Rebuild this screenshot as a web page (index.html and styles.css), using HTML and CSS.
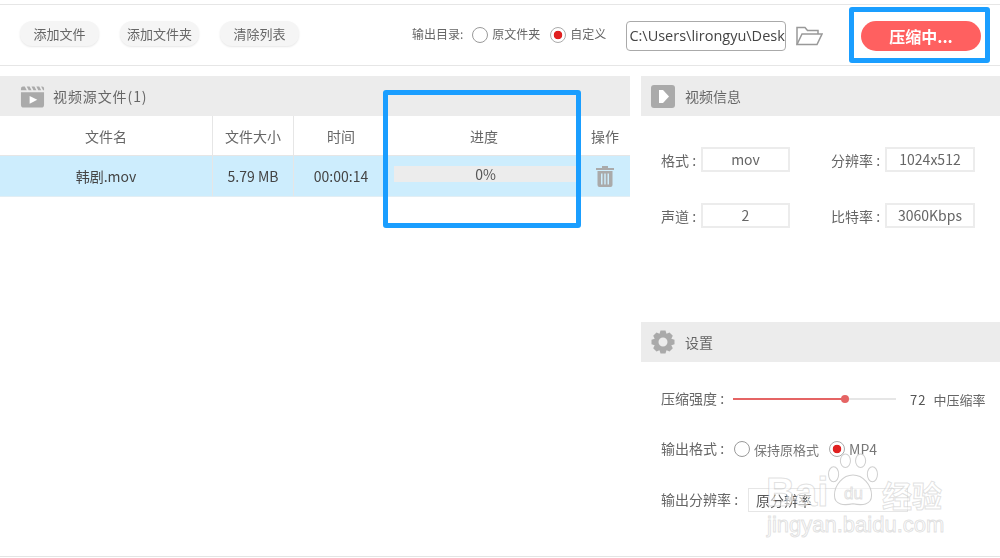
FILE: index.html
```html
<!DOCTYPE html>
<html lang="zh-CN">
<head>
  <meta charset="UTF-8">
  <title>视频压缩</title>
  <link rel="stylesheet" href="styles.css">
</head>
<body>
  <div class="app">
    <div class="toolbar">
      <button class="tool-btn">添加文件</button>
      <button class="tool-btn">添加文件夹</button>
      <button class="tool-btn">清除列表</button>
      <span class="out-label">输出目录:</span>
      <span class="radio"></span>
      <span class="radio-text">原文件夹</span>
      <span class="radio on"></span>
      <span class="radio-text">自定义</span>
      <div class="path-box">C:\Users\lirongyu\Desk</div>
      <svg class="folder" width="27" height="20" viewBox="0 0 27 20" fill="none" stroke="#999" stroke-width="1.5">
        <path d="M1 18.500V1.500H9L11.500 4.500H22V8"/>
        <path d="M1 18.500L6 8H26L21 18.500Z"/>
      </svg>
      <button class="run-btn">压缩中...</button>
    </div>

    <div class="main">
      <div class="left">
        <div class="panel-head">
          <svg width="25" height="23" viewBox="0 0 26 23">
            <path fill="#aaa" d="M1 3.500Q1 1 3 1H5L7 5H1ZM7 1H10L12 5H9ZM12 1H15L17 5H14ZM17 1H20L22 5H19ZM22 1H23Q25 1 25 3V5H24Z"/>
            <path fill="#aaa" d="M1 7H25V20Q25 23 22 23H4Q1 23 1 20Z"/>
            <path fill="#fff" d="M10 11L18 15L10 19Z"/>
          </svg>
          <span class="source-title">视频源文件(1)</span>
        </div>
        <div class="file-row file-head">
          <div class="cell">文件名</div>
          <div class="cell">文件大小</div>
          <div class="cell">时间</div>
          <div class="cell">进度</div>
          <div class="cell">操作</div>
        </div>
        <div class="file-row file-item">
          <div class="cell">韩剧.mov</div>
          <div class="cell">5.79 MB</div>
          <div class="cell">00:00:14</div>
          <div class="cell"><div class="progress">0%</div></div>
          <div class="cell">
            <svg width="18" height="21" viewBox="0 0 18 21" fill="#aaa">
              <path d="M6 0H12V2H18V4H0V2H6Z"/>
              <path d="M1.500 5H16.500V19Q16.500 21 14.500 21H3.500Q1.500 21 1.500 19ZM5 7.500V18.500H6.500V7.500ZM8.250 7.500V18.500H9.750V7.500ZM11.500 7.500V18.500H13V7.500Z" fill-rule="evenodd"/>
            </svg>
          </div>
        </div>
      </div>

      <div class="right">
        <div class="panel-head">
          <svg width="24" height="23" viewBox="0 0 24 23">
            <rect width="24" height="23" rx="3" fill="#aaa"/>
            <path fill="#fff" d="M8 5H12L18 11.500L12 18H8Z"/>
          </svg>
          <span>视频信息</span>
        </div>
        <div class="info-grid">
          <span class="info-label">格式 :</span><div class="info-val">mov</div>
          <span class="info-label">分辨率 :</span><div class="info-val">1024x512</div>
          <span class="info-label">声道 :</span><div class="info-val">2</div>
          <span class="info-label">比特率 :</span><div class="info-val">3060Kbps</div>
        </div>

        <div class="panel-head settings-head">
          <svg width="24" height="24" viewBox="0 0 24 24" fill="#aaa">
            <path fill-rule="evenodd" d="M9.500 0.500H14.500L15.500 3.800L18.500 2.500L21.800 5.800L20.300 8.800L23.500 9.800V14.300L20.300 15.300L21.800 18.300L18.500 21.600L15.500 20.200L14.500 23.500H9.500L8.500 20.200L5.500 21.600L2.200 18.300L3.700 15.300L0.500 14.300V9.800L3.700 8.800L2.200 5.800L5.500 2.500L8.500 3.800ZM12 7.500A4.500 4.500 0 1 0 12 16.500A4.500 4.500 0 1 0 12 7.500Z"/>
          </svg>
          <span>设置</span>
        </div>
        <div class="set-row strength">
          <span class="set-label">压缩强度 :</span>
          <div class="slider"><div class="slider-fill" style="width: 69%"></div><div class="slider-thumb" style="left: 69%"></div></div>
          <span class="slider-val">72</span>
          <span class="slider-name">中压缩率</span>
        </div>
        <div class="set-row format">
          <span class="set-label">输出格式 :</span>
          <span class="radio"></span>
          <span class="radio-text big">保持原格式</span>
          <span class="radio on"></span>
          <span class="radio-text big mp4">MP4</span>
        </div>
        <div class="set-row res">
          <span class="set-label">输出分辨率 :</span>
          <div class="res-box">原分辨率</div>
        </div>
      </div>
    </div>
  </div>

  <!-- annotations and watermark sit on top of the screenshot -->
  <div class="mark mark-run"></div>
  <div class="mark mark-progress"></div>

  <div class="watermark">
    <span class="wm-bai">Bai</span>
    <svg class="wm-paw" width="54" height="56" viewBox="0 0 64 66" fill="rgba(255,255,255,0.5)" stroke="#cfcfcf" stroke-width="1.2">
      <ellipse cx="9" cy="25" rx="6" ry="9"/>
      <ellipse cx="23" cy="9" rx="6" ry="8"/>
      <ellipse cx="41" cy="9" rx="6" ry="8"/>
      <ellipse cx="55" cy="25" rx="6" ry="9"/>
      <path d="M32 26C44 26 54 38 54 50C54 62 42 62 32 60C22 62 10 62 10 50C10 38 20 26 32 26Z"/>
    </svg>
    <span class="wm-du">du</span>
    <span class="wm-jy">经验</span>
    <span class="wm-url">jingyan.baidu.com</span>
  </div>
</body>
</html>
```

FILE: styles.css
```css
* {
  box-sizing: border-box;
}
html, body {
  margin: 0;
  height: 100%;
  overflow: hidden;
}
body {
  position: relative;
  background: #fff;
  color: #555;
  font-family: "Noto Sans CJK SC", "Noto Sans", sans-serif;
  font-size: 13px;
}
.app {
  height: 557px;
  padding-top: 4px;
  border-bottom: 1px solid #e4e4e4;
  filter: blur(0.4px);
}
.toolbar {
  height: 62px;
  padding: 0 19px 3px 20px;
  display: flex;
  align-items: center;
  border-top: 1px solid #e6e6e6;
  border-bottom: 1px solid #e6e6e6;
}
.tool-btn {
  width: 79px;
  height: 25px;
  margin-right: 21px;
  padding: 0;
  border: none;
  border-radius: 12px;
  background: #f5f5f5;
  box-shadow: 0 1px 2px rgba(0, 0, 0, 0.1);
  color: #666;
  font: inherit;
}
.out-label {
  margin-left: 92px;
  margin-right: 9px;
  font-size: 12px;
  color: #666;
}
.radio {
  flex: none;
  width: 16px;
  height: 16px;
  margin-right: 4px;
  border: 1px solid #999;
  border-radius: 50%;
  background: #fff;
}
.toolbar .radio {
  margin-top: 2px;
}
.radio.on {
  border-color: #aaa;
  background: radial-gradient(circle, #e02020 0 4px, #fff 4.6px);
}
.radio-text {
  margin-right: 10px;
  font-size: 12px;
  color: #666;
}
.radio-text.big {
  font-size: 13px;
  margin-right: 10px;
  color: #777;
}
.radio-text.mp4 {
  font-size: 14px;
}
.path-box {
  width: 160px;
  height: 30px;
  margin-top: 5px;
  margin-left: 10px;
  padding-left: 2px;
  border: 1px solid #aaa;
  border-radius: 4px;
  color: #444;
  font-family: "Open Sans", sans-serif;
  font-size: 14.500px;
  line-height: 28px;
  white-space: nowrap;
  overflow: hidden;
}
.folder {
  margin-top: 5px;
  margin-left: 10px;
}
.run-btn {
  width: 120px;
  height: 30px;
  margin-top: 4px;
  margin-left: auto;
  border: none;
  border-radius: 15px;
  background: #ff6060;
  color: #fff;
  font: inherit;
  font-size: 16px;
  font-weight: 700;
}
.main {
  display: flex;
  gap: 11px;
  padding-top: 10px;
}
.left {
  width: 630px;
}
.right {
  flex: 1;
}
.panel-head {
  height: 40px;
  padding-left: 20px;
  display: flex;
  align-items: center;
  gap: 8px;
  background: #ececec;
  color: #666;
  font-size: 14px;
}
.source-title {
  letter-spacing: 0.9px;
}
.right .panel-head {
  padding-left: 10px;
  gap: 10px;
}
.file-row {
  display: grid;
  grid-template-columns: 213px 81px 94px 192px 50px;
  text-align: center;
  font-size: 14px;
}
.cell {
  display: flex;
  align-items: center;
  justify-content: center;
  border-right: 1px solid #e6e6e6;
}
.cell:nth-child(n+3) {
  border-right: none;
}
.file-head {
  height: 40px;
  border-bottom: 1px solid #e6e6e6;
  color: #666;
}
.file-item {
  height: 41px;
  background: #cdedfd;
  border-bottom: 1px solid #e2eef4;
  color: #444;
}
.progress {
  width: 183px;
  height: 16px;
  margin: 0 0 5px 3px;
  background: #ececec;
  color: #555;
  font-size: 14px;
  line-height: 16px;
}
.info-grid {
  display: grid;
  grid-template-columns: 40px 89px 95px 90px;
  grid-auto-rows: 25px;
  row-gap: 31px;
  align-items: center;
  padding: 31px 0 0 20px;
  height: 206px;
  font-size: 14px;
}
.info-label {
  color: #666;
  white-space: nowrap;
}
.info-grid .info-label:nth-child(3),
.info-grid .info-label:nth-child(7) {
  padding-left: 41px;
}
.info-val {
  height: 25px;
  border: 2px solid #ececec;
  color: #666;
  line-height: 21px;
  text-align: center;
  font-size: 14px;
}
.set-row {
  display: flex;
  align-items: center;
  padding-left: 20px;
  font-size: 14px;
}
.strength {
  margin-top: 26px;
  height: 22px;
}
.format {
  margin-top: 28px;
  height: 22px;
}
.res {
  margin-top: 28px;
  height: 24px;
}
.set-label {
  padding-bottom: 2px;
  color: #666;
  white-space: nowrap;
}
.strength .set-label {
  width: 72px;
}
.format .set-label {
  width: 73px;
}
.res .set-label {
  width: 87px;
}
.slider {
  position: relative;
  width: 163px;
  height: 2px;
  background: #e6e6e6;
}
.slider-fill {
  height: 100%;
  background: #e56464;
}
.slider-thumb {
  position: absolute;
  top: -3px;
  width: 8px;
  height: 8px;
  margin-left: -4px;
  border-radius: 50%;
  background: #e56464;
}
.slider-val {
  margin-left: 14px;
  font-size: 13px;
  letter-spacing: 1px;
}
.slider-name {
  margin-left: 7px;
  color: #666;
  font-size: 13px;
}
.res-box {
  width: 160px;
  height: 24px;
  padding-left: 7px;
  border: 1px solid #e6e6e6;
  color: #555;
  line-height: 22px;
  font-size: 14px;
}
.mark {
  position: absolute;
  border: 5px solid #1a9eff;
  border-radius: 3px;
}
.mark-run {
  left: 849px;
  top: 7px;
  width: 141px;
  height: 56px;
}
.mark-progress {
  left: 383px;
  top: 90px;
  width: 198px;
  height: 138px;
}
.watermark {
  position: absolute;
  left: 0;
  top: 0;
  width: 100%;
  height: 100%;
  color: rgba(255, 255, 255, 0.6);
  -webkit-text-stroke: 1px rgba(180, 180, 180, 0.4);
  pointer-events: none;
}
.watermark span {
  position: absolute;
  font-family: "Liberation Sans", sans-serif;
  font-weight: 700;
  white-space: nowrap;
}
.wm-bai {
  left: 766px;
  top: 470px;
  font-size: 40px;
}
.wm-paw {
  position: absolute;
  left: 826px;
  top: 453px;
}
.watermark .wm-du {
  left: 844px;
  top: 484px;
  font-size: 17px;
  font-weight: 400;
}
.watermark .wm-jy {
  left: 882px;
  top: 472px;
  font-family: "Noto Sans CJK SC", sans-serif;
  font-size: 30px;
}
.watermark .wm-url {
  left: 767px;
  top: 512px;
  font-size: 22px;
  font-weight: 400;
}
```
